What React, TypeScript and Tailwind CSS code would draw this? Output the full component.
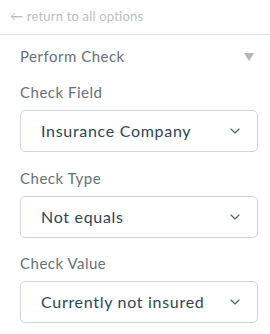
import { ChevronDown } from 'lucide-react';

interface SelectBoxProps {
  label: string;
  value: string;
}

function SelectBox({ label, value }: SelectBoxProps) {
  return (
    <div className="flex flex-col">
      <label className="text-[15px] leading-[20px] tracking-[0.5px] text-[#66707a] mb-[8px]">{label}</label>
      <div className="h-[42px] border border-[#ccd6e2] rounded-[5px] flex items-center justify-between pl-[20px] pr-[14px]">
        <span className="text-[16px] tracking-[0.7px] text-[#2e4459]">{value}</span>
        <ChevronDown size={16} strokeWidth={1.75} className="text-[#4d6277]" />
      </div>
    </div>
  );
}

export default function App() {
  return (
    <div className="w-[270px] h-[334px] bg-white font-['Lato',sans-serif] overflow-hidden">
      <div className="h-[35px] border-b border-[#dfe5ec] flex items-center pl-[10px]">
        <span className="text-[13px] tracking-[0.2px] text-[#b9bec3]">← return to all options</span>
      </div>
      <div className="pl-[20px] pr-[12px]">
        <div className="flex items-center justify-between h-[42px] pt-[1px]">
          <span className="text-[15px] tracking-[0.5px] text-[#66707a]">Perform Check</span>
          <svg width="10" height="8" viewBox="0 0 10 8" className="mr-[4px]">
            <path d="M0 0 L10 0 L5 8 Z" fill="#b3b7bc" />
          </svg>
        </div>
      </div>
      <div className="pl-[20px] pr-[12px] flex flex-col gap-[15.5px] pt-[5px]">
        <SelectBox label="Check Field" value="Insurance Company" />
        <SelectBox label="Check Type" value="Not equals" />
        <SelectBox label="Check Value" value="Currently not insured" />
      </div>
    </div>
  );
}
